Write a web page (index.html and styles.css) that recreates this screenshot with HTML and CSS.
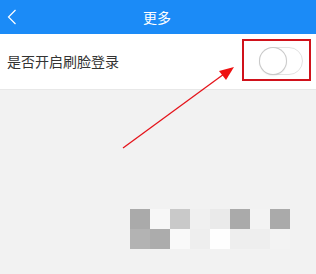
FILE: index.html
```html
<!DOCTYPE html>
<html lang="zh">
<head>
<meta charset="utf-8">
<link rel="stylesheet" href="styles.css">
</head>
<body>
<div class="page">
  <header class="topbar">
    <svg class="back" width="10" height="16" viewBox="0 0 10 16"><path d="M8.5 1 L1.5 8 L8.5 15" fill="none" stroke="#fff" stroke-width="1.2"/></svg>
    <div class="title">更多</div>
  </header>
  <div class="row">
    <span class="label">是否开启刷脸登录</span>
    <div class="switch"><div class="knob"></div></div>
  </div>
  <div class="area">
    <div class="mosaic">
      <i class="c1"></i><i class="c2"></i><i class="c3"></i><i class="c4"></i><i class="c5"></i><i class="c1"></i><i class="c6"></i><i class="c1"></i>
      <i class="c7"></i><i class="c8"></i><i class="c9"></i><i class="c10"></i><i class="c11"></i><i class="c10"></i><i class="c10"></i><i class="c6"></i>
    </div>
  </div>
  <div class="highlight"></div>
  <svg class="arrow" width="316" height="274" viewBox="0 0 316 274">
    <line x1="123" y1="148" x2="224" y2="74" stroke="#e5141b" stroke-width="1.3"/>
    <polygon points="234,67 219,71 226,80" fill="#ee1111"/>
  </svg>
</div>
</body>
</html>
```
FILE: styles.css
```css
html, body {
  margin: 0;
  padding: 0;
}
body {
  background: #f2f2f2;
  font-family: "Noto Sans CJK SC", "Noto Sans", sans-serif;
}
.page {
  position: relative;
  width: 316px;
  height: 274px;
  overflow: hidden;
}
.topbar {
  height: 34px;
  background: #1b8bf7;
  display: flex;
  align-items: center;
  justify-content: center;
  position: relative;
}
.back {
  position: absolute;
  left: 7px;
  top: 9px;
}
.title {
  color: #fff;
  font-size: 14px;
  line-height: 34px;
  margin-left: -2px;
}
.row {
  height: 55px;
  background: #fff;
  border-bottom: 1px solid #e8e8e8;
  display: flex;
  align-items: center;
  justify-content: space-between;
  padding: 0 13px 0 7px;
}
.label {
  font-size: 14px;
  color: #333;
  line-height: 20px;
  margin-top: -1px;
}
.switch {
  width: 42px;
  height: 26px;
  border: 1px solid #e2e2e2;
  border-radius: 14px;
  background: #fff;
  position: relative;
  margin-top: -2px;
}
.knob {
  width: 26px;
  height: 26px;
  border-radius: 50%;
  background: #fff;
  box-shadow: 0 0 0 1px #c9c9c9, 0 1px 2px rgba(0,0,0,0.2);
}
.area {
  padding: 119px 0 0 130px;
}
.mosaic {
  display: grid;
  grid-template-columns: repeat(8, 20px);
  grid-auto-rows: 20px;
}
.mosaic i { display: block; }
.c1 { background: #aaaaaa; }
.c2 { background: #f7f7f7; }
.c3 { background: #c9c9c9; }
.c4 { background: #f0f0f0; }
.c5 { background: #eaeaea; }
.c6 { background: #f3f3f3; }
.c7 { background: #b3b3b3; }
.c8 { background: #acacac; }
.c9 { background: #f9f9f9; }
.c10 { background: #eeeeee; }
.c11 { background: #fefefe; }
.highlight {
  position: absolute;
  left: 242px;
  top: 39px;
  width: 65px;
  height: 38px;
  border: 2px solid #d0121b;
}
.arrow {
  position: absolute;
  left: 0;
  top: 0;
}
```
